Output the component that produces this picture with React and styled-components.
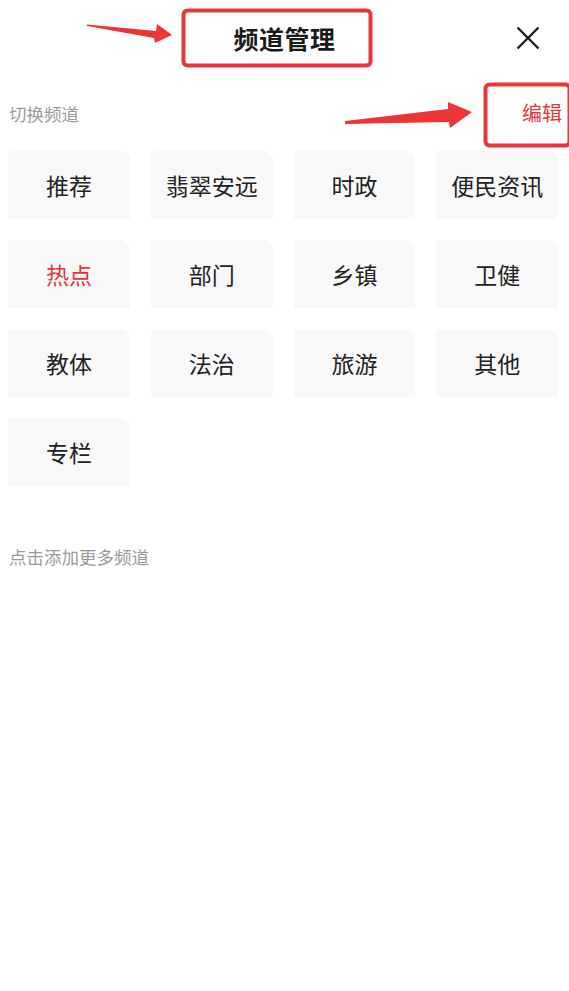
import React from "react";
import styled, { createGlobalStyle } from "styled-components";

const Global = createGlobalStyle`
  html, body { margin: 0; padding: 0; background: #fff; }
  body { font-family: "Noto Sans CJK SC", "Noto Sans", sans-serif; }
`;

const Page = styled.div`
  position: relative;
  width: 569px;
  min-height: 991px;
  background: #fff;
`;

const Header = styled.header`
  height: 76px;
  display: grid;
  grid-template-columns: 1fr auto 1fr;
  align-items: center;
`;

const Title = styled.h1`
  grid-column: 2;
  margin: 0;
  font-size: 25px;
  font-weight: 700;
  color: #1a1a1a;
  letter-spacing: 0.5px;
`;

const Close = styled.button`
  grid-column: 3;
  justify-self: end;
  margin-right: 29px;
  width: 24px;
  height: 24px;
  padding: 0;
  border: 0;
  background: none;
  display: flex;
`;

const SectionHead = styled.div`
  height: 75px;
  display: flex;
  align-items: center;
  justify-content: space-between;
  padding: 0 7px 0 9px;
`;

const Label = styled.span`
  font-size: 17.5px;
  color: #9a9a9a;
`;

const Edit = styled.span`
  font-size: 20px;
  color: #e0383e;
  margin-top: -3px;
`;

const Grid = styled.div`
  display: grid;
  grid-template-columns: repeat(4, 1fr);
  column-gap: 21px;
  row-gap: 21px;
  padding: 0 11px 0 8px;
`;

const Tile = styled.div`
  height: 68px;
  display: flex;
  align-items: center;
  justify-content: center;
  background: #f8f8f8;
  border-radius: 4px 9px 0 0;
  font-size: 23px;
  color: ${(p) => (p.$active ? "#e0383e" : "#222")};
`;

const MoreLabel = styled(Label)`
  display: block;
  margin-top: 59px;
  padding-left: 9px;
  line-height: 24px;
`;

const Overlay = styled.svg`
  position: absolute;
  left: 0;
  top: 0;
  pointer-events: none;
`;

const channels = [
  "推荐", "翡翠安远", "时政", "便民资讯",
  "热点", "部门", "乡镇", "卫健",
  "教体", "法治", "旅游", "其他",
  "专栏",
];

export default function App() {
  return (
    <Page>
      <Global />
      <Header>
        <Title>频道管理</Title>
        <Close aria-label="关闭">
          <svg width="24" height="24" viewBox="0 0 24 24">
            <path d="M1.5 1.5 L22.5 22.5 M22.5 1.5 L1.5 22.5" stroke="#1f1f1f" strokeWidth="2.4" fill="none" />
          </svg>
        </Close>
      </Header>
      <SectionHead>
        <Label>切换频道</Label>
        <Edit>编辑</Edit>
      </SectionHead>
      <Grid>
        {channels.map((c) => (
          <Tile key={c} $active={c === "热点"}>{c}</Tile>
        ))}
      </Grid>
      <MoreLabel>点击添加更多频道</MoreLabel>

      <Overlay width="569" height="200" viewBox="0 0 569 200">
        <rect x="183.5" y="10.5" width="187" height="55" rx="4" fill="none" stroke="#e8363c" strokeWidth="4" />
        <rect x="485.5" y="84.5" width="84" height="61" rx="4" fill="none" stroke="#e8363c" strokeWidth="4" />
        <polygon points="87,24.5 156,31 157,24 172,35 155,43 154,38 87,26" fill="#ec3539" />
        <polygon points="345,121 448,109 448,102 472,112 450,128 449,122 345,124" fill="#ec3539" />
      </Overlay>
    </Page>
  );
}
